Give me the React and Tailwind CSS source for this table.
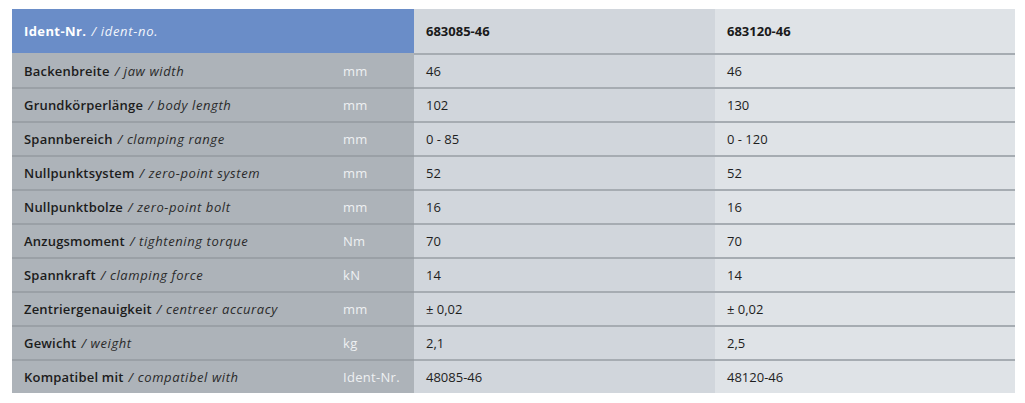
import React from 'react';

const rows = [
  { de: 'Backenbreite', en: 'jaw width', unit: 'mm', a: '46', b: '46' },
  { de: 'Grundkörperlänge', en: 'body length', unit: 'mm', a: '102', b: '130' },
  { de: 'Spannbereich', en: 'clamping range', unit: 'mm', a: '0 - 85', b: '0 - 120' },
  { de: 'Nullpunktsystem', en: 'zero-point system', unit: 'mm', a: '52', b: '52' },
  { de: 'Nullpunktbolze', en: 'zero-point bolt', unit: 'mm', a: '16', b: '16' },
  { de: 'Anzugsmoment', en: 'tightening torque', unit: 'Nm', a: '70', b: '70' },
  { de: 'Spannkraft', en: 'clamping force', unit: 'kN', a: '14', b: '14' },
  { de: 'Zentriergenauigkeit', en: 'centreer accuracy', unit: 'mm', a: '± 0,02', b: '± 0,02' },
  { de: 'Gewicht', en: 'weight', unit: 'kg', a: '2,1', b: '2,5' },
  { de: 'Kompatibel mit', en: 'compatibel with', unit: 'Ident-Nr.', a: '48085-46', b: '48120-46' },
];

const labelFont = { fontFamily: '"Open Sans", "Noto Sans", sans-serif' };
const valueFont = { fontFamily: '"Open Sans", "Noto Sans", sans-serif' };

export default function App() {
  return (
    <div className="bg-white w-[1025px] h-[403px] pt-[9px] pl-[12px]">
      <div className="w-[1003px] grid grid-cols-[402px_301px_300px]">
        <div className="h-[44px] bg-[#6a8dc8] flex items-center pl-[12px] pt-[2px] text-[13px] text-white" style={labelFont}>
          <span className="font-bold tracking-[0.4px]">Ident-Nr.</span>
          <span className="italic ml-[5px] tracking-[0.7px] text-[#f2f5fb]">/ ident-no.</span>
        </div>
        <div className="h-[44px] bg-[#d1d6dc] flex items-center pl-[12px] pt-[2px] text-[13px] font-bold text-[#1a1a1a]" style={valueFont}>
          683085-46
        </div>
        <div className="h-[44px] bg-[#dfe3e7] flex items-center pl-[12px] pt-[2px] text-[13px] font-bold text-[#1a1a1a]" style={valueFont}>
          683120-46
        </div>

        {rows.map((row, i) => (
          <React.Fragment key={row.de}>
            <div
              className={`h-[34px] bg-[#adb3b9] border-t-2 flex items-center pt-[2px] text-[13px] ${i === 0 ? 'border-[#adb3b9]' : 'border-[#9aa0a6]'}`}
              style={labelFont}
            >
              <div className="w-[331px] pl-[12px] text-[#1c1c1c]">
                <span className="font-semibold tracking-[0.2px]">{row.de}</span>
                <span className="italic ml-[5px] tracking-[0.6px] text-[#2a2a2a]">/ {row.en}</span>
              </div>
              <div className="text-[#eef0f2] tracking-[0.3px]">{row.unit}</div>
            </div>
            <div className="h-[34px] bg-[#d1d6dc] border-t-2 border-[#a6acb2] flex items-center pl-[12px] pt-[2px] text-[13px] text-[#1e1e1e]" style={valueFont}>
              {row.a}
            </div>
            <div className="h-[34px] bg-[#dfe3e7] border-t-2 border-[#a6acb2] flex items-center pl-[12px] pt-[2px] text-[13px] text-[#1e1e1e]" style={valueFont}>
              {row.b}
            </div>
          </React.Fragment>
        ))}
      </div>
    </div>
  );
}
